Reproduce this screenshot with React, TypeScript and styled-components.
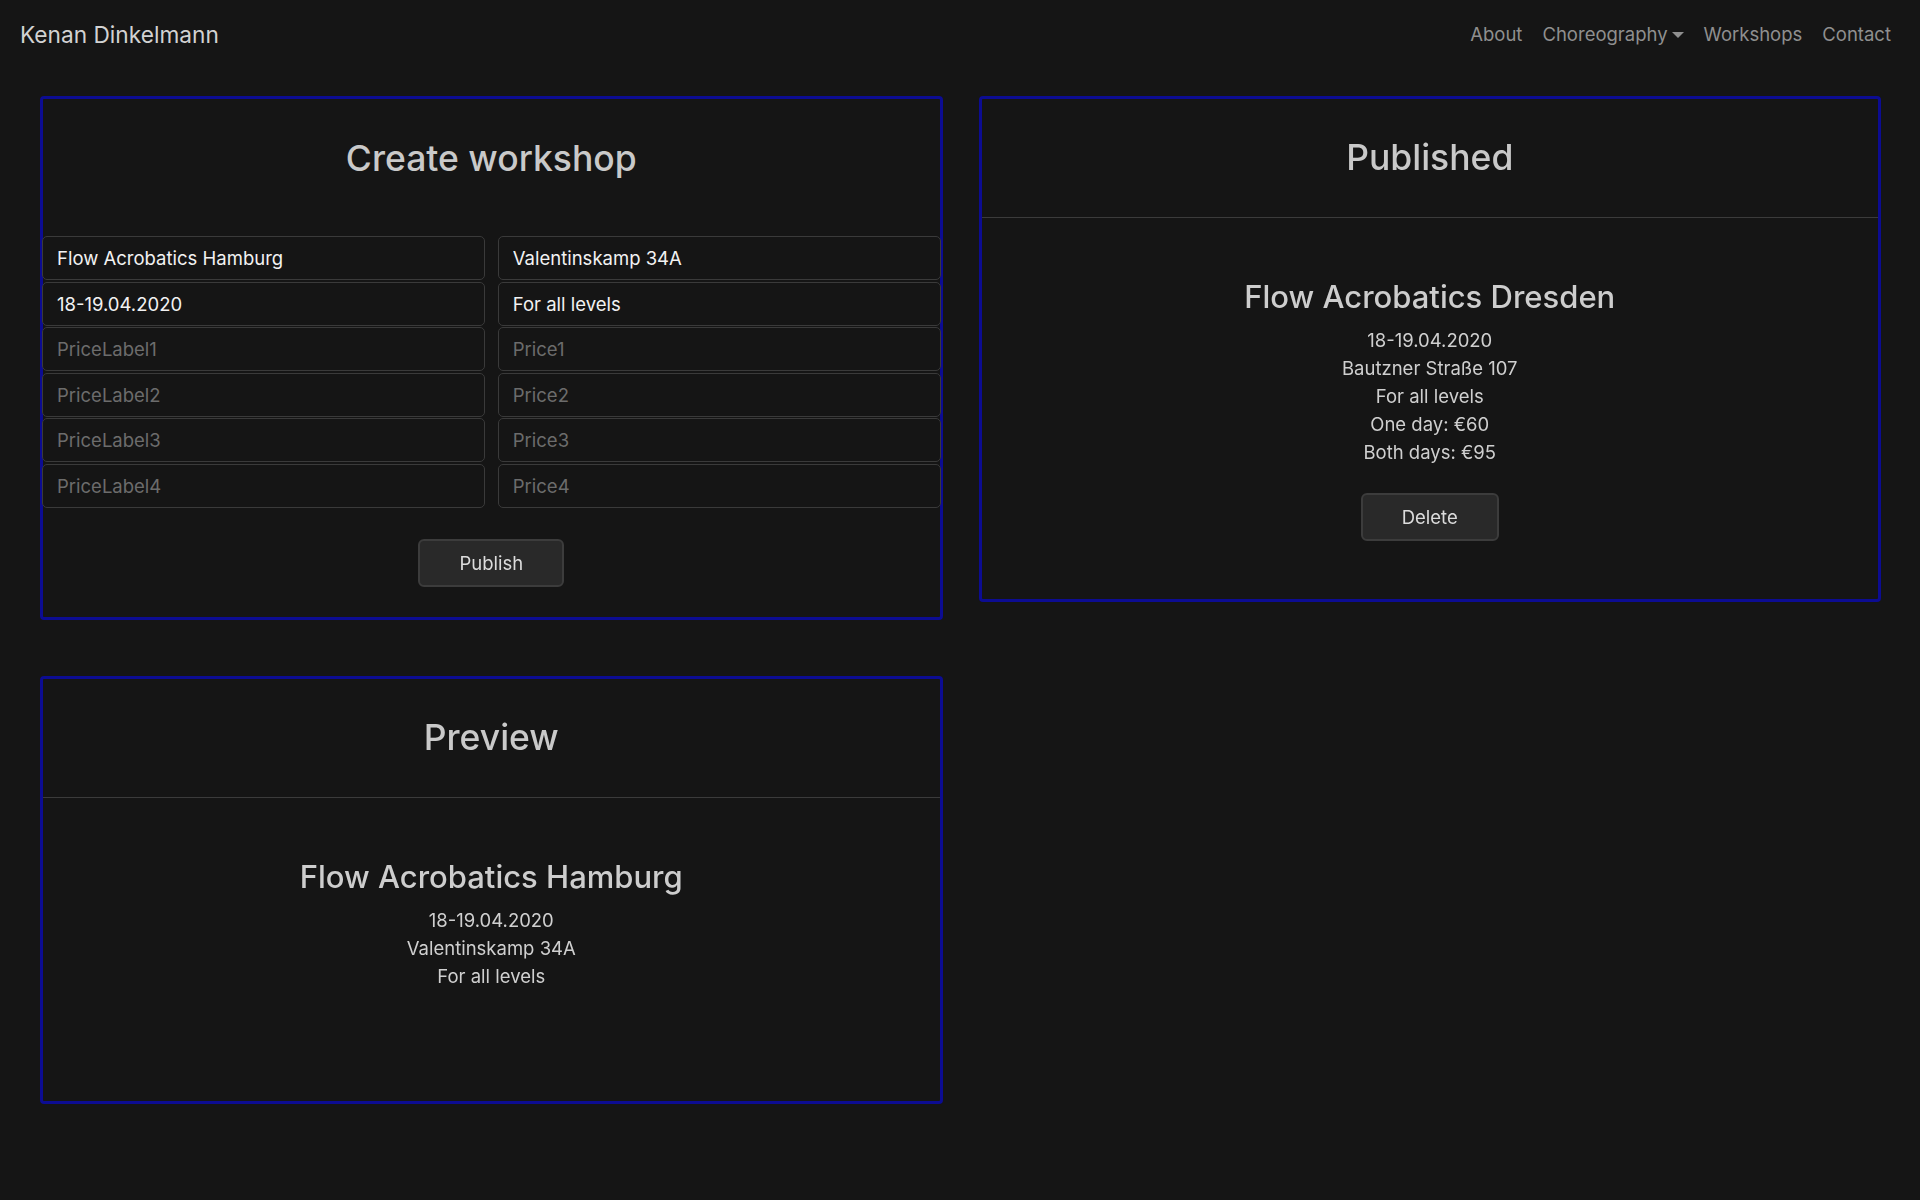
import React, { useState } from 'react';
import styled, { createGlobalStyle } from 'styled-components';

const GlobalStyle = createGlobalStyle`
  body {
    margin: 0;
    background: #151515;
    font-family: Inter, "Noto Sans", "Liberation Sans", sans-serif;
    color: #cfcfcf;
  }
  * {
    box-sizing: border-box;
  }
`;

const Navbar = styled.nav`
  display: flex;
  align-items: center;
  justify-content: space-between;
  height: 68px;
  padding: 0 29px 0 20px;
`;

const Brand = styled.a`
  font-size: 22.7px;
  color: #d2d2d2;
  text-decoration: none;
`;

const NavLinks = styled.div`
  display: flex;
  align-items: center;
  gap: 20px;
`;

const NavLink = styled.a<{ $dropdown?: boolean }>`
  font-size: 18.5px;
  color: #8f8f8f;
  text-decoration: none;
  display: flex;
  align-items: center;

  ${(p) =>
    p.$dropdown &&
    `
    &::after {
      content: '';
      margin-left: 4px;
      margin-top: 1px;
      border-top: 6px solid #8f8f8f;
      border-left: 6px solid transparent;
      border-right: 6px solid transparent;
    }
  `}
`;

const Main = styled.main`
  display: grid;
  grid-template-columns: 1fr 1fr;
  column-gap: 36px;
  row-gap: 56px;
  align-items: start;
  padding: 28px 39px 40px 40px;
`;

const Card = styled.section`
  border: 3px solid #0c0c92;
  border-radius: 4px;
`;

const CardHeader = styled.div<{ $divider?: boolean }>`
  height: 119px;
  display: flex;
  align-items: center;
  justify-content: center;
  padding-bottom: 1px;
  border-bottom: ${(p) => (p.$divider ? '1.5px solid #3b3b3b' : 'none')};
`;

const CardTitle = styled.h2`
  margin: 0;
  font-size: 35.5px;
  font-weight: 500;
  color: #c9c9c9;
`;

const Form = styled.form`
  padding-top: 18px;
`;

const InputGrid = styled.div`
  display: grid;
  grid-template-columns: 1fr 1fr;
  column-gap: 13px;
  row-gap: 1.5px;
  margin: 0 -1px;
`;

const Input = styled.input`
  height: 44px;
  width: 100%;
  padding: 0 14px;
  background: #151515;
  border: 1.5px solid #3a3a3a;
  border-radius: 5px;
  color: #f2f2f2;
  font-family: inherit;
  font-size: 18.5px;
  caret-color: #f2f2f2;

  &::placeholder {
    color: #6c6c6c;
  }

  &:focus {
    outline: none;
  }
`;

const ButtonRow = styled.div<{ $pad: string }>`
  display: flex;
  justify-content: center;
  padding: ${(p) => p.$pad};
`;

const Button = styled.button`
  height: 48px;
  padding: 0 39px;
  background: #292929;
  border: 2px solid #3c3c3c;
  border-radius: 6px;
  color: #dcdcdc;
  font-family: inherit;
  font-size: 18.5px;
  cursor: pointer;
`;

const CardBody = styled.div<{ $minHeight?: number }>`
  padding-top: 60px;
  text-align: center;
  min-height: ${(p) => (p.$minHeight ? `${p.$minHeight}px` : 'auto')};
`;

const WorkshopName = styled.h3`
  margin: 0 0 10px;
  font-size: 31px;
  line-height: 38px;
  font-weight: 500;
  color: #cdcdcd;
`;

const InfoLine = styled.div`
  font-size: 18.5px;
  line-height: 28px;
  color: #cfcfcf;
`;

type Workshop = {
  name: string;
  address: string;
  date: string;
  level: string;
  prices: { label: string; price: string }[];
};

const published: Workshop = {
  name: 'Flow Acrobatics Dresden',
  address: 'Bautzner Straße 107',
  date: '18-19.04.2020',
  level: 'For all levels',
  prices: [
    { label: 'One day', price: '€60' },
    { label: 'Both days', price: '€95' },
  ],
};

const WorkshopInfo = ({ workshop }: { workshop: Workshop }) => (
  <>
    <WorkshopName>{workshop.name}</WorkshopName>
    {workshop.date && <InfoLine>{workshop.date}</InfoLine>}
    {workshop.address && <InfoLine>{workshop.address}</InfoLine>}
    {workshop.level && <InfoLine>{workshop.level}</InfoLine>}
    {workshop.prices
      .filter((p) => p.label && p.price)
      .map((p) => (
        <InfoLine key={p.label}>
          {p.label}: {p.price}
        </InfoLine>
      ))}
  </>
);

const App = () => {
  const [name, setName] = useState('Flow Acrobatics Hamburg');
  const [address, setAddress] = useState('Valentinskamp 34A');
  const [date, setDate] = useState('18-19.04.2020');
  const [level, setLevel] = useState('For all levels');
  const [labels, setLabels] = useState(['', '', '', '']);
  const [prices, setPrices] = useState(['', '', '', '']);

  const draft: Workshop = {
    name,
    address,
    date,
    level,
    prices: labels.map((label, i) => ({ label, price: prices[i] })),
  };

  const setAt = (list: string[], set: (v: string[]) => void, i: number, v: string) => {
    const next = [...list];
    next[i] = v;
    set(next);
  };

  return (
    <>
      <GlobalStyle />
      <Navbar>
        <Brand href="#">Kenan Dinkelmann</Brand>
        <NavLinks>
          <NavLink href="#">About</NavLink>
          <NavLink href="#" $dropdown>
            Choreography
          </NavLink>
          <NavLink href="#">Workshops</NavLink>
          <NavLink href="#">Contact</NavLink>
        </NavLinks>
      </Navbar>

      <Main>
        <Card>
          <CardHeader>
            <CardTitle>Create workshop</CardTitle>
          </CardHeader>
          <Form onSubmit={(e) => e.preventDefault()}>
            <InputGrid>
              <Input value={name} placeholder="Name" onChange={(e) => setName(e.target.value)} />
              <Input value={address} placeholder="Address" onChange={(e) => setAddress(e.target.value)} />
              <Input value={date} placeholder="Date" onChange={(e) => setDate(e.target.value)} />
              <Input
                value={level}
                placeholder="Level"
                autoFocus
                onFocus={(e) => e.target.setSelectionRange(e.target.value.length, e.target.value.length)}
                onChange={(e) => setLevel(e.target.value)}
              />
              {labels.map((label, i) => (
                <React.Fragment key={i}>
                  <Input
                    value={label}
                    placeholder={`PriceLabel${i + 1}`}
                    onChange={(e) => setAt(labels, setLabels, i, e.target.value)}
                  />
                  <Input
                    value={prices[i]}
                    placeholder={`Price${i + 1}`}
                    onChange={(e) => setAt(prices, setPrices, i, e.target.value)}
                  />
                </React.Fragment>
              ))}
            </InputGrid>
            <ButtonRow $pad="31px 0 30px">
              <Button type="submit">Publish</Button>
            </ButtonRow>
          </Form>
        </Card>

        <Card>
          <CardHeader $divider>
            <CardTitle>Published</CardTitle>
          </CardHeader>
          <CardBody>
            <WorkshopInfo workshop={published} />
            <ButtonRow $pad="27px 0 58px">
              <Button type="button">Delete</Button>
            </ButtonRow>
          </CardBody>
        </Card>

        <Card>
          <CardHeader $divider>
            <CardTitle>Preview</CardTitle>
          </CardHeader>
          <CardBody $minHeight={303}>
            <WorkshopInfo workshop={draft} />
          </CardBody>
        </Card>
      </Main>
    </>
  );
};

export default App;
